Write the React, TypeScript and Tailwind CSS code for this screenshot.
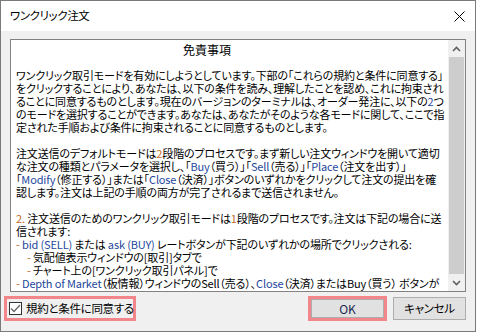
import React from 'react'

const B = ({ children }: { children: React.ReactNode }) => (
    <span className="text-[#24479c]">{children}</span>
)
const O = ({ children }: { children: React.ReactNode }) => (
    <span className="text-[#c4681c]">{children}</span>
)

const Line = ({ children, indent }: { children?: React.ReactNode; indent?: boolean }) => (
    <div className={`h-[13px] whitespace-nowrap ${indent ? 'pl-[11px]' : ''}`}>{children}</div>
)

function Chevron({ down }: { down?: boolean }) {
    return (
        <svg width="9" height="6" viewBox="0 0 9 6" className={down ? 'rotate-180' : ''}>
            <path d="M1 5 L4.5 1.5 L8 5" fill="none" stroke="#606060" strokeWidth="1.6" />
        </svg>
    )
}

export default function App() {
    return (
        <div className="w-[478px] h-[334px] bg-white font-['Noto_Sans_CJK_JP','Noto_Sans',sans-serif] text-[12px] text-black [font-feature-settings:'palt']">
            <div className="w-[476px] h-[332px] border border-[#7a7a7a] flex flex-col bg-[#f0f0f0]">
                {/* title bar */}
                <div className="h-[30px] bg-white flex items-center justify-between pl-[9px] pr-[10px]">
                    <span className="leading-none text-[11.5px] tracking-[-0.4px]">ワンクリック注文</span>
                    <svg width="11" height="11" viewBox="0 0 11 11">
                        <path d="M0.5 0.5 L10.5 10.5 M10.5 0.5 L0.5 10.5" stroke="#000" strokeWidth="1" />
                    </svg>
                </div>

                <div className="flex-1 flex flex-col px-[9px] pt-[8px]">
                    {/* agreement text */}
                    <div className="h-[253px] border border-[#828282] bg-white flex">
                        <div className="flex-1 overflow-hidden pl-[5px] pt-[3px] leading-[13px] text-[11px] tracking-[-0.15px]">
                            <Line><span className="pl-[167px] text-[12px] tracking-normal">免責事項</span></Line>
                            <Line />
                            <Line>ワンクリック取引モードを有効にしようとしています。下部の「これらの規約と条件に同意する」</Line>
                            <Line>をクリックすることにより、あなたは、以下の条件を読み、理解したことを認め、これに拘束され</Line>
                            <Line>ることに同意するものとします。現在のバージョンのターミナルは、オーダー発注に、以下の<B>2</B>つ</Line>
                            <Line>のモードを選択することができます。あなたは、あなたがそのような各モードに関して、ここで指</Line>
                            <Line>定された手順および条件に拘束されることに同意するものとします。</Line>
                            <Line />
                            <Line>注文送信のデフォルトモードは<O>2</O>段階のプロセスです。まず新しい注文ウィンドウを開いて適切</Line>
                            <Line>な注文の種類とパラメータを選択し、「<B>Buy</B>（買う）」「<B>Sell</B>（売る）」「<B>Place</B>（注文を出す）」</Line>
                            <Line>「<B>Modify</B>（修正する）」または「<B>Close</B>（決済）」ボタンのいずれかをクリックして注文の提出を確</Line>
                            <Line>認します。注文は上記の手順の両方が完了されるまで送信されません。</Line>
                            <Line />
                            <Line><O>2.</O> 注文送信のためのワンクリック取引モードは<O>1</O>段階のプロセスです。注文は下記の場合に送</Line>
                            <Line>信されます:</Line>
                            <Line><O>-</O> <B>bid (SELL)</B> または <B>ask (BUY)</B> レートボタンが下記のいずれかの場所でクリックされる:</Line>
                            <Line indent><O>-</O> 気配値表示ウィンドウの[取引]タブで</Line>
                            <Line indent><O>-</O> チャート上の[ワンクリック取引パネル]で</Line>
                            <Line><O>-</O> <B>Depth of Market</B>（板情報）ウィンドウのSell（売る）、<B>Close</B>（決済）またはBuy（買う） ボタンが</Line>
                        </div>
                        {/* scrollbar */}
                        <div className="w-[17px] flex flex-col bg-[#f0f0f0]">
                            <div className="h-[17px] flex items-center justify-center">
                                <Chevron />
                            </div>
                            <div className="flex-1 mx-[1px] bg-[#cdcdcd]" />
                            <div className="h-[17px] flex items-center justify-center">
                                <Chevron down />
                            </div>
                        </div>
                    </div>

                    {/* bottom row */}
                    <div className="mt-[4px] flex items-center justify-between">
                        <label className="-ml-[6px] h-[25px] w-[132px] border-[3px] border-[#f3868b] flex items-center gap-[4px] pl-[2px] whitespace-nowrap">
                            <span className="shrink-0 w-[13px] h-[13px] border border-[#333] bg-white flex items-center justify-center">
                                <svg width="11" height="9" viewBox="0 0 11 9">
                                    <path d="M1 4.5 L4 7.5 L10 1" fill="none" stroke="#666" strokeWidth="1.3" />
                                </svg>
                            </span>
                            <span className="leading-none text-[11.5px] tracking-[-0.3px]">規約と条件に同意する</span>
                        </label>
                        <div className="flex items-center gap-[6px]">
                            <div className="border-[3px] border-[#f3868b]">
                                <button className="block w-[73px] h-[19px] bg-[#e1e1e1] border border-[#adadad] leading-none text-[#1c2a55]">OK</button>
                            </div>
                            <button className="block w-[73px] h-[23px] bg-[#e1e1e1] border border-[#adadad] leading-none text-[11.5px] tracking-[-0.3px]">キャンセル</button>
                        </div>
                    </div>
                </div>
            </div>
        </div>
    )
}
